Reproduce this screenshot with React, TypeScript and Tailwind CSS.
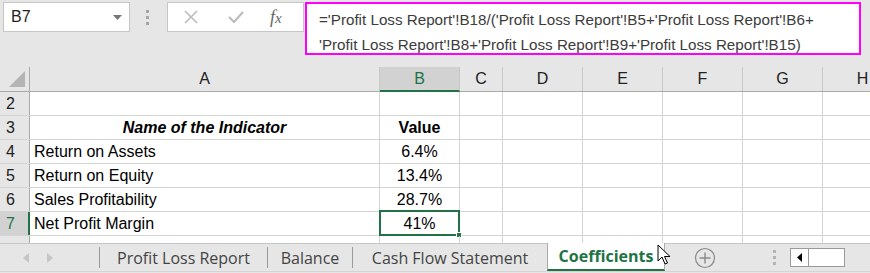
import React from "react";

const cols = [
  { key: "A", w: "w-[350px]" },
  { key: "B", w: "w-[80px]" },
  { key: "C", w: "w-[43px]" },
  { key: "D", w: "w-[80px]" },
  { key: "E", w: "w-[80px]" },
  { key: "F", w: "w-[80px]" },
  { key: "G", w: "w-[80px]" },
  { key: "H", w: "w-[80px]" },
];

type RowData = { n: string; a: string; b: string; head?: boolean; active?: boolean; cut?: boolean };

const rows: RowData[] = [
  { n: "2", a: "", b: "" },
  { n: "3", a: "Name of the Indicator", b: "Value", head: true },
  { n: "4", a: "Return on Assets", b: "6.4%" },
  { n: "5", a: "Return on Equity", b: "13.4%" },
  { n: "6", a: "Sales Profitability", b: "28.7%" },
  { n: "7", a: "Net Profit Margin", b: "41%", active: true },
];

const font = "font-['Liberation_Sans',Arial,sans-serif]";

function Cursor() {
  return (
    <svg className="absolute left-[657px] top-[244px]" width="14" height="22" viewBox="0 0 14 22">
      <path d="M1 1 L1 17 L5 13 L8 20 L10.5 19 L7.5 12.5 L13 12.5 Z" fill="#fff" stroke="#000" strokeWidth="1" strokeLinejoin="round" />
    </svg>
  );
}

function Row({ r }: { r: RowData }) {
  return (
    <div className="flex h-[24px] shrink-0 border-b border-[#d4d4d4] bg-white">
      <div
        className={`w-[30px] shrink-0 flex items-center pl-[6px] text-[16px] border-r ${
          r.active ? "bg-[#d2d2d2] text-[#217346] border-r-2 border-r-[#217346]" : "bg-[#e6e6e6] text-[#222] border-[#ababab]"
        } ${r.cut ? "pt-[6px]" : ""}`}
      >
        {r.n}
      </div>
      <div
        className={`w-[350px] shrink-0 flex items-center border-r border-[#d4d4d4] text-[16px] text-black whitespace-nowrap ${
          r.head ? "justify-center font-bold italic" : "pl-[4px]"
        } ${r.cut ? "pt-[6px]" : ""}`}
      >
        {r.a}
      </div>
      <div className="relative w-[80px] shrink-0 flex items-center justify-center border-r border-[#d4d4d4] text-[16px] text-black">
        <span className={r.head ? "font-bold" : ""}>{r.b}</span>
        {r.active && (
          <>
            <div className="absolute -left-px -top-[2px] -right-px -bottom-px border-2 border-[#217346]" />
            <div className="absolute -right-[3px] -bottom-[3px] w-[6px] h-[6px] bg-[#217346] border border-white" />
          </>
        )}
      </div>
      {cols.slice(2).map((c) => (
        <div key={c.key} className={`${c.w} shrink-0 border-r border-[#d4d4d4]`} />
      ))}
    </div>
  );
}

export default function App() {
  return (
    <div className={`relative w-[870px] h-[273px] overflow-hidden bg-[#e6e6e6] ${font}`}>
      {/* formula bar */}
      <div className="flex items-start h-[67px]">
        <div className="ml-[3px] mt-[2px] w-[127px] h-[30px] bg-white border border-[#c6c6c6] flex items-center justify-between pl-[7px] pr-[7px]">
          <span className="text-[16px] text-[#222]">B7</span>
          <svg width="9" height="5" viewBox="0 0 9 5"><path d="M0 0 H9 L4.5 5 Z" fill="#777" /></svg>
        </div>
        <div className="ml-[16px] mt-[10px] flex flex-col gap-[3px]">
          <span className="w-[3px] h-[3px] bg-[#a6a6a6]" />
          <span className="w-[3px] h-[3px] bg-[#a6a6a6]" />
          <span className="w-[3px] h-[3px] bg-[#a6a6a6]" />
        </div>
        <div className="ml-[18px] mt-[2px] w-[137px] h-[30px] bg-white border border-[#c6c6c6] flex items-center">
          <svg className="ml-[15px]" width="16" height="16" viewBox="0 0 16 16"><path d="M2 2 L14 14 M14 2 L2 14" stroke="#bcbcbc" strokeWidth="1.6" /></svg>
          <svg className="ml-[28px]" width="18" height="16" viewBox="0 0 18 16"><path d="M2 8 L7 13 L16 3" stroke="#bcbcbc" strokeWidth="2.2" fill="none" /></svg>
          <span className="ml-[25px] text-[18px] italic text-[#666] font-['Liberation_Serif',serif] leading-none">
            f<span className="text-[15px]">x</span>
          </span>
        </div>
        <div className="ml-[1px] mt-[2px] w-[556px] h-[53px] bg-white border-2 border-[#ff00ff] pl-[12px] pt-[3px] text-[15.2px] leading-[25px] text-[#3c3c3c] whitespace-nowrap">
          <div>='Profit Loss Report'!B18/('Profit Loss Report'!B5+'Profit Loss Report'!B6+</div>
          <div>'Profit Loss Report'!B8+'Profit Loss Report'!B9+'Profit Loss Report'!B15)</div>
        </div>
      </div>

      {/* column headers */}
      <div className="flex h-[25px] border-b border-[#ababab] bg-[#e6e6e6]">
        <div className="w-[30px] shrink-0 border-r border-[#ababab] flex items-end justify-end pr-[4px] pb-[4px]">
          <svg width="16" height="16" viewBox="0 0 16 16"><path d="M16 0 V16 H0 Z" fill="#b4b4b4" /></svg>
        </div>
        {cols.map((c) => (
          <div
            key={c.key}
            className={`${c.w} shrink-0 flex items-center justify-center text-[16px] border-r border-[#c8c8c8] ${
              c.key === "B" ? "bg-[#d2d2d2] text-[#217346] border-b-2 border-b-[#217346] -mb-px" : "text-[#222]"
            }`}
          >
            {c.key}
          </div>
        ))}
      </div>

      {/* rows */}
      {rows.map((r) => (
        <Row key={r.n} r={r} />
      ))}
      <div className="flex flex-col h-[7px] overflow-hidden">
        <Row r={{ n: "8", a: "Current Liquidity Coefficient", b: "", cut: true }} />
      </div>

      {/* sheet tabs */}
      <div className="flex items-stretch h-[29px] border-t border-[#c6c6c6] border-b border-b-[#d4d4d4] bg-[#e6e6e6] font-['Open_Sans',sans-serif] text-[16px] text-[#444]">
        <div className="w-[100px] flex items-center pl-[23px] gap-[18px] border-r border-[#9a9a9a] my-[3px]">
          <svg width="6" height="10" viewBox="0 0 6 10"><path d="M6 0 V10 L0 5 Z" fill="#c6c6c6" /></svg>
          <svg width="6" height="10" viewBox="0 0 6 10"><path d="M0 0 V10 L6 5 Z" fill="#c6c6c6" /></svg>
        </div>
        <div className="w-[168px] flex items-center justify-center border-r border-[#9a9a9a] my-[3px]">Profit Loss Report</div>
        <div className="w-[85px] flex items-center justify-center border-r border-[#9a9a9a] my-[3px]">Balance</div>
        <div className="w-[194px] flex items-center justify-center">Cash Flow Statement</div>
        <div className="w-[118px] -mt-px flex items-center justify-center bg-white border-b-2 border-[#217346] font-bold text-[#217346] border-x border-x-[#ababab]">
          Coefficients
        </div>
        <div className="ml-[29px] flex items-center">
          <svg width="22" height="22" viewBox="0 0 22 22">
            <circle cx="11" cy="11" r="9.5" fill="none" stroke="#8a8a8a" strokeWidth="1.2" />
            <path d="M11 5.5 V16.5 M5.5 11 H16.5" stroke="#8a8a8a" strokeWidth="1.4" />
          </svg>
        </div>
        <div className="ml-[57px] flex flex-col justify-center gap-[3px]">
          <span className="w-[3px] h-[3px] bg-[#b4b4b4]" />
          <span className="w-[3px] h-[3px] bg-[#b4b4b4]" />
          <span className="w-[3px] h-[3px] bg-[#b4b4b4]" />
        </div>
        <div className="ml-[14px] my-[4px] flex border border-[#9a9a9a] bg-white">
          <div className="w-[18px] flex items-center justify-center border-r border-[#9a9a9a]">
            <svg width="5" height="9" viewBox="0 0 5 9"><path d="M5 0 V9 L0 4.5 Z" fill="#000" /></svg>
          </div>
          <div className="w-[35px]" />
        </div>
      </div>
      <Cursor />
    </div>
  );
}
